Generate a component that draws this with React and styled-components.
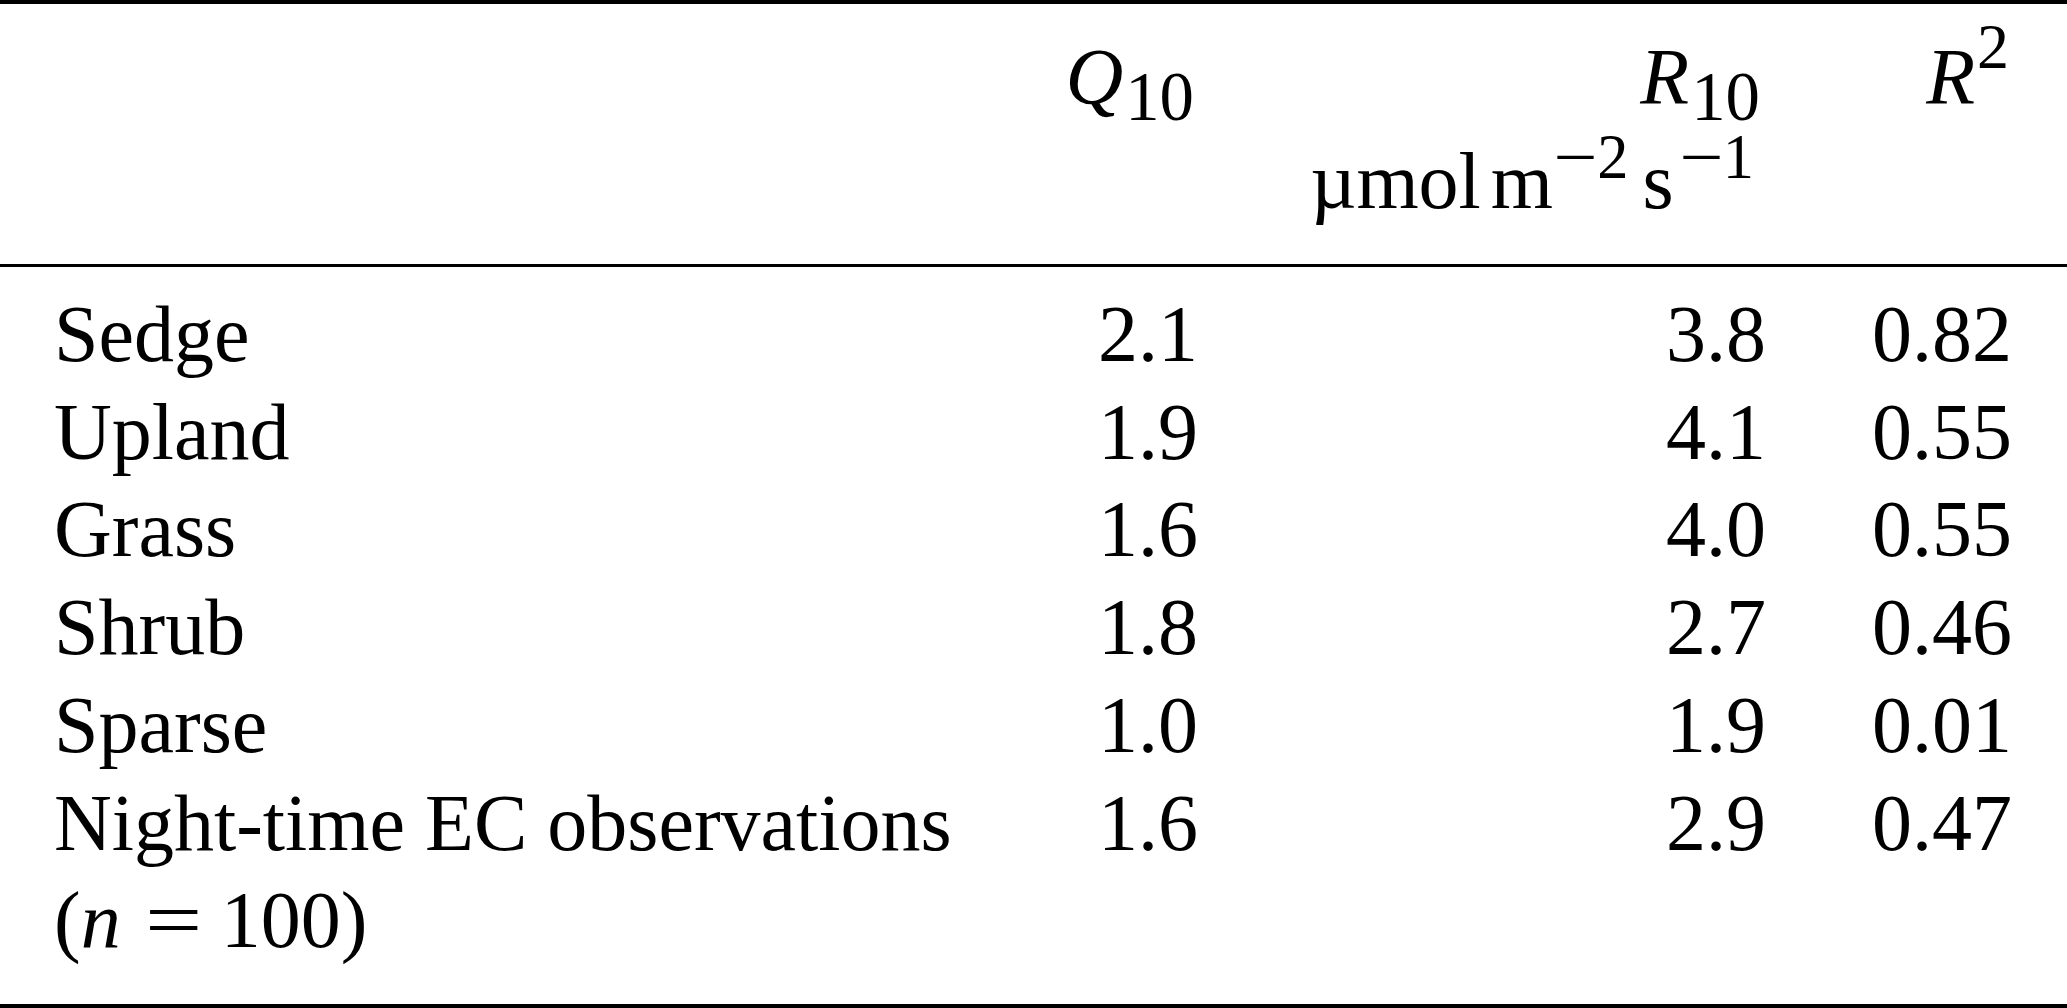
import React from "react";
import styled, { createGlobalStyle } from "styled-components";

const GlobalStyle = createGlobalStyle`
  html, body {
    margin: 0;
    padding: 0;
    background: #ffffff;
  }
  body {
    font-family: "Liberation Serif", "Times New Roman", serif;
    color: #000000;
    overflow: hidden;
  }
`;

const COLS = "900px 244px 568px 246px";

const Table = styled.div`
  width: 2067px;
  box-sizing: border-box;
  border-top: 4px solid #000;
`;

const HeaderGrid = styled.div`
  display: grid;
  grid-template-columns: ${COLS};
  padding: 22px 55px 31px 54px;
  font-size: 80px;
  line-height: 103.5px;
`;

const BodyGrid = styled.div`
  display: grid;
  grid-template-columns: ${COLS};
  padding: 19px 55px 34px 54px;
  font-size: 80px;
  line-height: 97.7px;
`;

const Rule = styled.div`
  height: ${(p) => p.$weight}px;
  background: #000;
`;

const Cell = styled.div`
  white-space: nowrap;
  text-align: ${(p) => (p.$right ? "right" : "left")};
  padding-right: ${(p) => p.$pad || 0}px;
`;

const Var = styled.i`
  font-style: italic;
`;

const Sub = styled.span`
  font-size: 0.86em;
  line-height: 0;
  vertical-align: -16px;
  margin-left: 2px;
`;

const Sup = styled.span`
  font-size: ${(p) => p.$size || 0.8}em;
  line-height: 0;
  vertical-align: ${(p) => p.$raise}px;
  margin-left: ${(p) => p.$gap || 0}px;
`;

const Op = styled.span`
  display: inline-block;
  line-height: 0;
  transform: scaleX(${(p) => p.$sx});
  margin: 0 ${(p) => p.$mr || 0}px 0 ${(p) => p.$ml || 0}px;
`;

const Thin = styled.span`
  display: inline-block;
  width: ${(p) => p.$w || 10}px;
`;

const rows = [
  ["Sedge", "2.1", "3.8", "0.82"],
  ["Upland", "1.9", "4.1", "0.55"],
  ["Grass", "1.6", "4.0", "0.55"],
  ["Shrub", "1.8", "2.7", "0.46"],
  ["Sparse", "1.0", "1.9", "0.01"],
  ["Night-time EC observations", "1.6", "2.9", "0.47"],
];

function Units() {
  return (
    <>
      µmol
      <Thin $w={10} />m
      <Sup $size={0.78} $raise={30}>
        <Op $sx={1.25} $ml={5} $mr={4}>
          −
        </Op>
        2
      </Sup>
      <Thin $w={14} />s
      <Sup $size={0.78} $raise={30}>
        <Op $sx={1.25} $ml={10} $mr={4}>
          −
        </Op>
        1
      </Sup>
    </>
  );
}

export default function App() {
  return (
    <>
      <GlobalStyle />
      <Table>
        <HeaderGrid>
          <Cell />
          <Cell $right $pad={4}>
            <Var>Q</Var>
            <Sub>10</Sub>
          </Cell>
          <Cell $right $pad={6}>
            <Var>R</Var>
            <Sub>10</Sub>
          </Cell>
          <Cell $right $pad={3}>
            <Var>R</Var>
            <Sup $raise={36} $gap={2}>
              2
            </Sup>
          </Cell>
          <Cell />
          <Cell />
          <Cell $right $pad={12}>
            <Units />
          </Cell>
          <Cell />
        </HeaderGrid>
        <Rule $weight={3} />
        <BodyGrid>
          {rows.map((r) => (
            <React.Fragment key={r[0]}>
              <Cell>{r[0]}</Cell>
              <Cell $right>{r[1]}</Cell>
              <Cell $right>{r[2]}</Cell>
              <Cell $right>{r[3]}</Cell>
            </React.Fragment>
          ))}
          <Cell>
            (<Var>n</Var>
            <Op $sx={1.27} $ml={30} $mr={25}>
              =
            </Op>
            100)
          </Cell>
          <Cell />
          <Cell />
          <Cell />
        </BodyGrid>
        <Rule $weight={4} />
      </Table>
    </>
  );
}
